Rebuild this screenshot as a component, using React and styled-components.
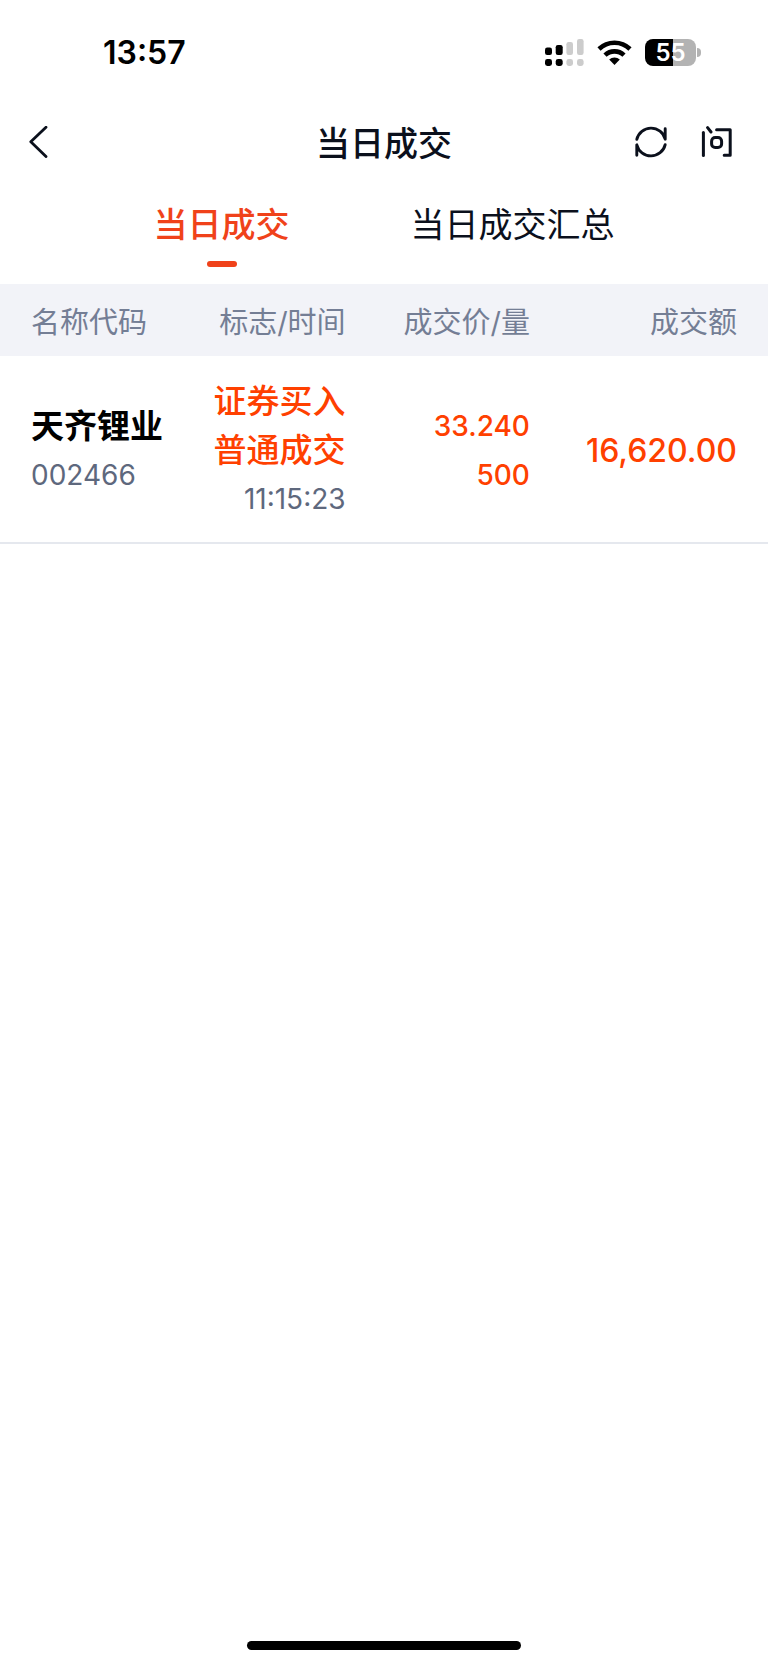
import styled, { createGlobalStyle, ThemeProvider } from "styled-components";

const theme = {
  colors: {
    text: '#0b101c',
    name: '#000',
    muted: '#747e95',
    code: '#5e687d',
    tab: '#f0421a',
    buy: '#ff4000',
    headBg: '#f2f3f8',
    line: '#e5e8ee',
  },
};

const TABS = ['当日成交', '当日成交汇总'];

const COLUMNS = [
  { text: '名称代码', width: '22%' },
  { text: '标志/时间', width: '23%' },
  { text: '成交价/量', width: '24%' },
  { text: '成交额', width: '31%' },
];

const DEALS = [
  {
    name: '天齐锂业',
    code: '002466',
    flags: ['证券买入', '普通成交'],
    time: '11:15:23',
    price: '33.240',
    volume: '500',
    amount: '16,620.00',
  },
];

const GlobalStyle = createGlobalStyle`
  * {
    box-sizing: border-box;
  }

  body {
    margin: 0;
    background: #fff;
    font-family: Inter, "Noto Sans CJK SC", sans-serif;
  }

  button {
    padding: 0;
    border: 0;
    background: none;
    color: inherit;
    font: inherit;
    cursor: pointer;
  }
`;

const Page = styled.div`
  display: flex;
  flex-direction: column;
  min-height: 100vh;
  color: ${({theme}) => theme.colors.text};
`;

const StatusBar = styled.div`
  display: flex;
  align-items: center;
  justify-content: space-between;
  height: 104px;
  padding: 0 67px 0 103px;
  color: #000;
`;

const Clock = styled.time`
  font-size: 32px;
  font-weight: 600;
`;

const StatusIcons = styled.div`
  display: flex;
  align-items: center;
  gap: 13px;

  svg {
    display: block;
  }
`;

const BatteryWrap = styled.div`
  display: flex;
  align-items: center;
  gap: 1px;
`;

const BatteryBody = styled.div`
  width: 51px;
  height: 27px;
  border-radius: 8px;
  background: linear-gradient(to right, #000 55%, #b3b3b3 55%);
  color: #fff;
  font-size: 24px;
  font-weight: 600;
  line-height: 27px;
  text-align: center;
`;

const BatteryCap = styled.div`
  width: 4px;
  height: 9px;
  border-radius: 0 4px 4px 0;
  background: #b3b3b3;
`;

const Header = styled.header`
  display: grid;
  grid-template-columns: 1fr auto 1fr;
  align-items: center;
  height: 76px;
  padding: 0 35px 0 29px;
`;

const Title = styled.h1`
  margin: 0;
  padding: 0 0 2px 6px;
  font-size: 34px;
  font-weight: 500;
`;

const IconButton = styled.button`
  width: 32px;
  height: 32px;

  svg {
    display: block;
  }
`;

const Actions = styled.div`
  display: flex;
  justify-content: flex-end;
  gap: 34px;
`;

const Tabs = styled.nav`
  display: flex;
  justify-content: center;
  gap: 121px;
  height: 104px;
  padding-top: 20px;
`;

const Tab = styled.button`
  display: flex;
  flex-direction: column;
  align-items: center;
  gap: 11px;
  height: 67px;
  color: ${({theme, $active}) => $active ? theme.colors.tab : theme.colors.text};
  font-size: 34px;
  font-weight: ${({$active}) => $active ? 500 : 400};
  line-height: 50px;

  &::after {
    content: '';
    width: 30px;
    height: 6px;
    border-radius: 3px;
    background: ${({theme, $active}) => $active ? theme.colors.tab : 'transparent'};
  }
`;

const Table = styled.table`
  width: 100%;
  border-spacing: 0;
  table-layout: fixed;
`;

const HeadCell = styled.th`
  width: ${({$width}) => $width};
  height: 72px;
  padding: 0;
  background: ${({theme}) => theme.colors.headBg};
  color: ${({theme}) => theme.colors.muted};
  font-size: 29px;
  font-weight: 400;
  text-align: right;
  white-space: nowrap;

  &:first-child {
    padding-left: 31px;
    text-align: left;
  }

  &:last-child {
    padding-right: 31px;
  }
`;

const Cell = styled.td`
  padding: 21px 0 18px;
  border-bottom: 2px solid ${({theme}) => theme.colors.line};
  text-align: right;
  vertical-align: middle;
  white-space: nowrap;

  &:first-child {
    padding-left: 31px;
    text-align: left;
  }

  &:last-child {
    padding-right: 31px;
  }
`;

const SIZES = { small: 28, medium: 32, large: 33 };

const Line = styled.div`
  color: ${({theme, $color}) => theme.colors[$color]};
  font-size: ${({$size}) => SIZES[$size || 'small']}px;
  font-weight: ${({$weight}) => $weight || 500};
  line-height: 49px;
`;

const HomeIndicator = styled.div`
  width: 274px;
  height: 9px;
  margin: auto auto 15px;
  border-radius: 5px;
  background: #000;
`;

const BackIcon = () => (
  <svg width="32" height="32" viewBox="0 0 32 32" fill="none" stroke="currentColor" strokeWidth="2.8" strokeLinecap="round" strokeLinejoin="round">
    <path d="M17 1.2 1.8 15.8 17 30.6" />
  </svg>
);

const RefreshIcon = () => (
  <svg width="32" height="32" viewBox="0 0 32 32" fill="none" stroke="currentColor" strokeWidth="2.9" strokeLinecap="round" strokeLinejoin="round">
    <path d="M1.8 13.4A14.6 14.6 0 0 1 30.2 13.2V2.8" />
    <path d="M30.2 18.6A14.6 14.6 0 0 1 1.8 18.8V29.2" />
  </svg>
);

const AskIcon = () => (
  <svg width="32" height="32" viewBox="0 0 32 32" fill="none" stroke="currentColor" strokeWidth="3" strokeLinecap="round" strokeLinejoin="round">
    <path d="M2.4 6.6V29.6" />
    <path d="M6.6 1.6 10 6" />
    <path d="M15.6 3.8H29.2V29.2H23.2" />
    <rect x="10.6" y="11.6" width="10" height="10" rx="3.6" />
  </svg>
);

const SignalIcon = () => (
  <svg width="39" height="27" viewBox="0 0 39 27">
    <g fill="#000">
      <rect x="0" y="8.5" width="7" height="7.5" rx="2.2" />
      <rect x="10.7" y="6" width="7" height="10" rx="2.2" />
      <rect x="0" y="20" width="7" height="7" rx="2.4" />
      <rect x="10.7" y="20" width="7" height="7" rx="2.4" />
    </g>
    <g fill="#ccc">
      <rect x="21.4" y="3" width="6.6" height="13" rx="2.2" />
      <rect x="32" y="0" width="6.6" height="16" rx="2.2" />
      <rect x="21.4" y="20" width="6.6" height="7" rx="2.4" />
      <rect x="32" y="20" width="6.6" height="7" rx="2.4" />
    </g>
  </svg>
);

const WifiIcon = () => (
  <svg width="35" height="25" viewBox="0 0 35 25">
    <g fill="none" stroke="#000" strokeWidth="4.6">
      <path d="M2 9A22.4 22.4 0 0 1 33 9" />
      <path d="M8 15.2A13.8 13.8 0 0 1 27 15.2" />
    </g>
    <path d="M17.5 25 12.2 19.6A7.6 7.6 0 0 1 22.8 19.6Z" />
  </svg>
);

const Battery = ({level}) => (
  <BatteryWrap>
    <BatteryBody>{level}</BatteryBody>
    <BatteryCap />
  </BatteryWrap>
);

const buildRow = ({name, code, flags, time, price, volume, amount}) => (
  <tr key={code}>
    <Cell>
      <Line $color="name" $size="large" $weight={700}>{name}</Line>
      <Line $color="code" $weight={400}>{code}</Line>
    </Cell>
    <Cell>
      {flags.map(f => <Line key={f} $color="buy" $size="large">{f}</Line>)}
      <Line $color="code" $weight={400}>{time}</Line>
    </Cell>
    <Cell>
      <Line $color="buy">{price}</Line>
      <Line $color="buy">{volume}</Line>
    </Cell>
    <Cell>
      <Line $color="buy" $size="medium">{amount}</Line>
    </Cell>
  </tr>
)

export default () => (
  <ThemeProvider theme={theme}>
    <GlobalStyle />
    <Page>
      <StatusBar>
        <Clock>13:57</Clock>
        <StatusIcons>
          <SignalIcon />
          <WifiIcon />
          <Battery level={55} />
        </StatusIcons>
      </StatusBar>
      <Header>
        <IconButton aria-label="返回"><BackIcon /></IconButton>
        <Title>当日成交</Title>
        <Actions>
          <IconButton aria-label="刷新"><RefreshIcon /></IconButton>
          <IconButton aria-label="问"><AskIcon /></IconButton>
        </Actions>
      </Header>
      <Tabs>
        {TABS.map((t, i) => <Tab key={t} $active={i === 0}>{t}</Tab>)}
      </Tabs>
      <Table>
        <thead>
          <tr>
            {COLUMNS.map(c => <HeadCell key={c.text} scope="col" $width={c.width}>{c.text}</HeadCell>)}
          </tr>
        </thead>
        <tbody>{DEALS.map(d => buildRow(d))}</tbody>
      </Table>
      <HomeIndicator />
    </Page>
  </ThemeProvider>
);
